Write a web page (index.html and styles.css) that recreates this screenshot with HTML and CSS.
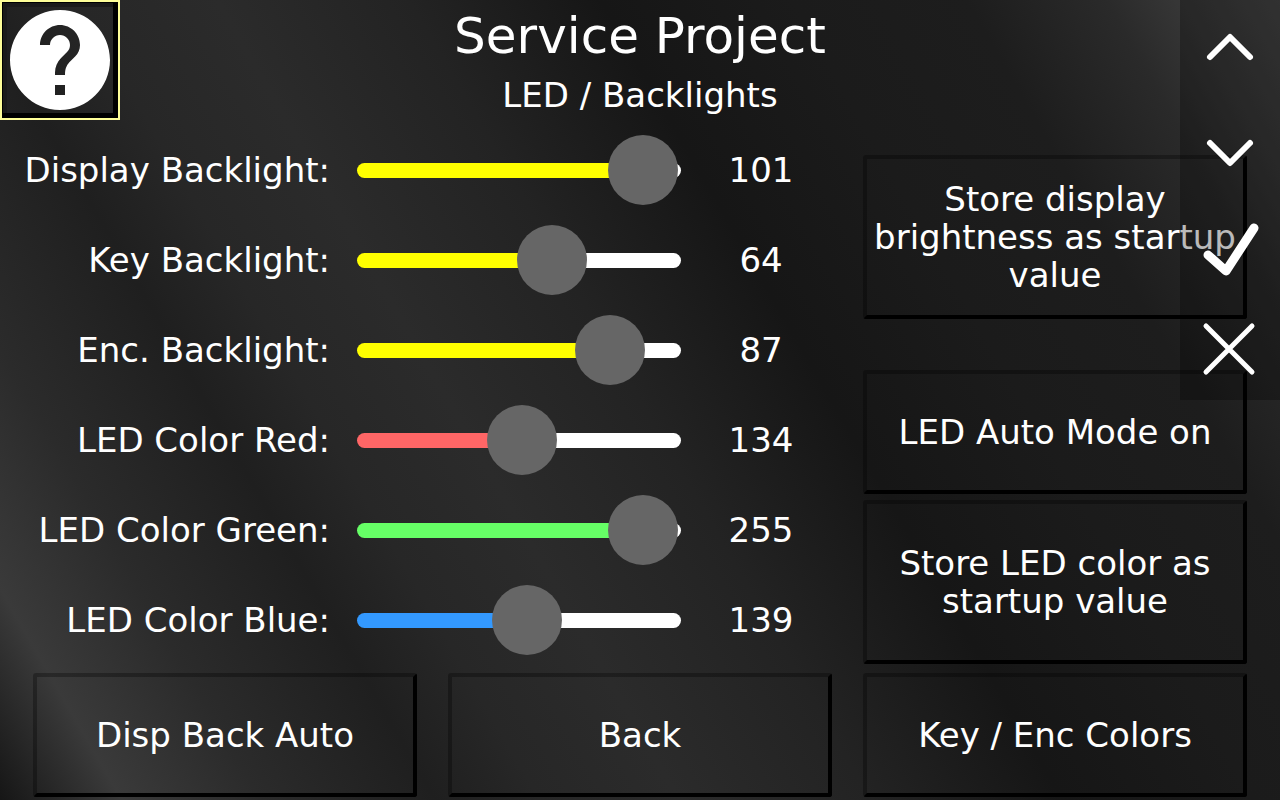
FILE: index.html
```
<!DOCTYPE html>
<html lang="en">
<head>
    <meta charset="UTF-8">
    <title>Service Project</title>
    <link rel="stylesheet" href="styles.css">
</head>
<body>
    <button class="help-button" aria-label="Help">
        <svg viewBox="2 2 20 20" width="100" height="100">
            <path fill="#fff" d="M12 2C6.48 2 2 6.48 2 12s4.48 10 10 10 10-4.48 10-10S17.52 2 12 2zm1 17h-2v-2h2v2zm2.07-7.75l-.9.92C13.45 12.9 13 13.5 13 15h-2v-.5c0-1.1.45-2.1 1.17-2.83l1.24-1.26c.37-.36.59-.86.59-1.41 0-1.1-.9-2-2-2s-2 .9-2 2H8c0-2.21 1.79-4 4-4s4 1.79 4 4c0 .88-.36 1.68-.93 2.25z"/>
        </svg>
    </button>

    <header>
        <h1>Service Project</h1>
        <h2>LED / Backlights</h2>
    </header>

    <main>
        <section class="sliders">
            <div class="slider-row yellow">
                <label for="display">Display Backlight:</label>
                <input type="range" id="display" min="0" max="101" value="101">
                <output for="display">101</output>
            </div>
            <div class="slider-row yellow">
                <label for="key">Key Backlight:</label>
                <input type="range" id="key" min="0" max="100" value="64">
                <output for="key">64</output>
            </div>
            <div class="slider-row yellow">
                <label for="enc">Enc. Backlight:</label>
                <input type="range" id="enc" min="0" max="100" value="87">
                <output for="enc">87</output>
            </div>
            <div class="slider-row red">
                <label for="red">LED Color Red:</label>
                <input type="range" id="red" min="0" max="255" value="134">
                <output for="red">134</output>
            </div>
            <div class="slider-row green">
                <label for="green">LED Color Green:</label>
                <input type="range" id="green" min="0" max="255" value="255">
                <output for="green">255</output>
            </div>
            <div class="slider-row blue">
                <label for="blue">LED Color Blue:</label>
                <input type="range" id="blue" min="0" max="255" value="139">
                <output for="blue">139</output>
            </div>
        </section>

        <section class="actions">
            <button class="panel-button tall">Store display brightness as startup value</button>
            <button class="panel-button auto-mode">LED Auto Mode on</button>
            <button class="panel-button tall">Store LED color as startup value</button>
        </section>
    </main>

    <footer>
        <button class="panel-button">Disp Back Auto</button>
        <button class="panel-button">Back</button>
        <button class="panel-button">Key / Enc Colors</button>
    </footer>

    <nav class="side-keys">
        <button aria-label="Up">
            <svg viewBox="0 0 100 100"><path stroke-width="6" d="M30 57L50 37L70 57"/></svg>
        </button>
        <button aria-label="Down">
            <svg viewBox="0 0 100 100"><path stroke-width="6" d="M30 43L50 63L70 43"/></svg>
        </button>
        <button aria-label="OK">
            <svg viewBox="0 0 100 100"><path stroke-width="9" d="M28 55L46 71L74 28"/></svg>
        </button>
        <button aria-label="Cancel">
            <svg viewBox="0 0 100 100"><path stroke-width="5" d="M26 26L72 72M72 26L26 72"/></svg>
        </button>
    </nav>

    <script>
        function updateSlider(input) {
            input.style.setProperty("--ratio", input.value / input.max);
            input.nextElementSibling.textContent = input.value;
        }

        document.querySelectorAll("input[type=range]").forEach(input => {
            updateSlider(input);
            input.addEventListener("input", () => updateSlider(input));
        });
    </script>
</body>
</html>
```
FILE: styles.css
```
* {
    box-sizing: border-box;
}

body {
    margin: 0;
    min-height: 100vh;
    font-family: "DejaVu Sans", sans-serif;
    font-size: 34px;
    line-height: 38px;
    color: #fff;
    background: linear-gradient(60deg, #161616 0, #3a3a3a 7%, #2b2b2b 15%, #1f1f1f 25%, #272727 31%, #2b2b2b 39%, #232323 50%, #161616 61%, #1b1b1b 72%, #1d1d1d 82%, #2a2a2a 90%, #363636 94%, #444 100%);
}

button {
    font: inherit;
    color: inherit;
    background: none;
    cursor: pointer;
}

header {
    height: 125px;
    text-align: center;
}

h1, h2 {
    margin: 0;
    font-weight: normal;
}

h1 {
    font-size: 50px;
    line-height: 72px;
}

h2 {
    font-size: 34px;
    line-height: 46px;
}

.help-button {
    position: absolute;
    top: 0;
    left: 0;
    width: 120px;
    height: 120px;
    padding: 0;
    border: 2px solid #ffff99;
    box-shadow: inset -5px -5px #000, inset 0 0 0 1px #000, inset 5px 5px #1b1b1b;
}

.help-button svg {
    display: block;
    margin: auto;
}

main {
    display: grid;
    grid-template-columns: 1fr calc((100% - 82px) / 3);
    column-gap: 31px;
    padding: 0 33px 0 13px;
}

.slider-row {
    display: grid;
    grid-template-columns: 317px 1fr 142px;
    align-items: center;
    height: 90px;
}

.slider-row label {
    justify-self: end;
    white-space: nowrap;
}

.slider-row output {
    text-align: center;
}

input[type=range] {
    appearance: none;
    height: 70px;
    margin: 0 9px 0 27px;
    background: none;
    /* middle of the thumb */
    --fill: calc(32px + (100% - 70px) * var(--ratio, 0));
}

input[type=range]::-webkit-slider-runnable-track {
    height: 15px;
    border-radius: 8px;
    background: linear-gradient(to right, var(--color) var(--fill), #fff var(--fill));
}

input[type=range]::-webkit-slider-thumb {
    appearance: none;
    width: 70px;
    height: 70px;
    margin-top: -28px;
    border-radius: 50%;
    background: #666;
    transform: translateX(-3px);
}

.yellow { --color: #ffff00; }
.red { --color: #ff6666; }
.green { --color: #66ff66; }
.blue { --color: #3399ff; }

.actions {
    display: flex;
    flex-direction: column;
    padding-top: 30px;
}

.panel-button {
    width: 100%;
    height: 124px;
    padding: 0;
    border: 4px solid;
    border-color: rgba(0, 0, 0, 0.3) #000 #000 rgba(0, 0, 0, 0.3);
    border-radius: 3px;
}

.tall {
    height: 164px;
}

.auto-mode {
    margin: 51px 0 6px;
}

footer {
    display: grid;
    grid-template-columns: repeat(3, 1fr);
    column-gap: 31px;
    padding: 8px 33px 3px;
}

.side-keys {
    position: absolute;
    top: 0;
    right: 0;
    width: 100px;
    background: rgba(0, 0, 0, 0.27);
}

.side-keys button {
    display: block;
    width: 100px;
    height: 100px;
    padding: 0;
    border: none;
}

.side-keys svg {
    display: block;
    fill: none;
    stroke: #fff;
    stroke-linecap: round;
    stroke-linejoin: round;
}
```
